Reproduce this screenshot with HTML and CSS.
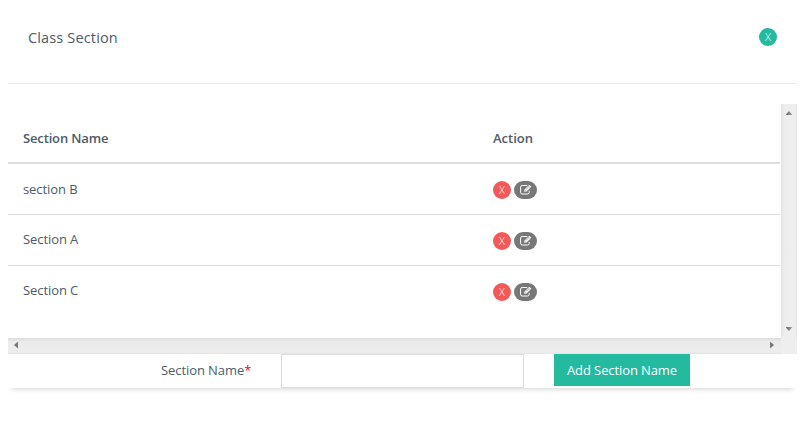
FILE: index.html
```html
<!DOCTYPE html>
<html lang="en">
<head>
<meta charset="utf-8">
<title>Class Section</title>
<link rel="stylesheet" href="styles.css">
</head>
<body>
<svg class="defs" width="0" height="0">
  <symbol id="edit" viewBox="0 0 12 11">
    <path d="M7.2 1.5H2.2Q.6 1.5 .6 3.1V8.4Q.6 10 2.2 10H7.6Q9.2 10 9.2 8.4V6.9" fill="none" stroke="#fff" stroke-width="1"/>
    <path d="M4.3 5.8 9.3 .8 11.3 2.8 6.3 7.8H4.3Z" fill="#fff"/>
    <path d="M5 6.5 6 7.3M8.3 2 10.1 3.8M6.1 5.4 8.6 2.9" stroke="#777" stroke-width=".6"/>
  </symbol>
</svg>
<main class="panel">
  <header class="head"><h1>Class Section</h1><button class="dot close">X</button></header>
  <div class="viewer">
    <div class="content">
      <div class="row columns"><span>Section Name</span><span>Action</span></div>
      <div class="row"><span>section B</span><div class="actions"><button class="dot remove">X</button><button class="dot edit"><svg><use href="#edit"/></svg></button></div></div>
      <div class="row"><span>Section A</span><div class="actions"><button class="dot remove">X</button><button class="dot edit"><svg><use href="#edit"/></svg></button></div></div>
      <div class="row"><span>Section C</span><div class="actions"><button class="dot remove">X</button><button class="dot edit"><svg><use href="#edit"/></svg></button></div></div>
    </div>
    <div class="vbar"><i class="up"></i><i class="down"></i></div>
    <div class="hbar"><i class="left"></i><i class="right"></i></div>
    <div class="corner"></div>
  </div>
  <form class="add"><label for="name">Section Name<b>*</b></label><input id="name" type="text"><button class="submit" type="button">Add Section Name</button></form>
</main>
<div class="shade"></div>
</body>
</html>
```

FILE: styles.css
```css
* { box-sizing: border-box; }
body { margin: 0; background: #fff; color: #4d5b69; font: 13px/18px "Open Sans", sans-serif; }
button { font: inherit; border: 0; padding: 0; color: #fff; }
.defs { display: block; }
.panel { width: 789px; height: 388px; margin-left: 8px; box-shadow: 1px 0 0 #fdfdfd, -1px 0 0 #fdfdfd; }
.shade { width: 789px; height: 6px; margin-left: 8px; background: linear-gradient(90deg, #fff, transparent 8px, transparent 781px, #fff), linear-gradient(#e2e2e2, #f6f6f6 50%, #fff); }
.head { height: 84px; padding: 28px 20px 0; display: flex; justify-content: space-between; align-items: flex-start; border-bottom: 1px solid #ebebeb; }
h1 { margin: 0; font-size: 14.5px; line-height: 20px; font-weight: 500; letter-spacing: .15px; }
.dot { height: 18px; border-radius: 9px; font-weight: 300; font-size: 11px; line-height: 18px; text-align: center; }
.close { width: 18px; background: #23baa0; }
.remove { width: 18px; background: #f35958; }
.edit { width: 23px; background: #777; display: flex; align-items: center; justify-content: center; }
.edit svg { width: 12px; height: 11px; margin-top: -1px; }
.viewer { height: 250px; margin-top: 20px; display: grid; grid-template: 233px 17px / 773px 16px; }
.content { padding-right: 1px; }
.row { display: grid; grid-template-columns: 470px 1fr; height: 51px; border-bottom: 1px solid #ddd; padding: 15px 15px 0; letter-spacing: -.08px; }
.row:nth-child(2) { padding-top: 16px; }
.row:last-child { border-bottom: 0; }
.row.columns { height: 60px; padding-top: 25px; border-bottom-width: 2px; font-weight: 600; letter-spacing: -.15px; }
.row.columns span:last-child { letter-spacing: 0; }
.actions { display: flex; gap: 3px; padding-top: 2px; }
.row:nth-child(2) .actions { padding-top: 1px; }
.vbar { background: linear-gradient(90deg, #e2e2e2, #ededed 3px, #efefef 14px, #e4e4e4); display: flex; flex-direction: column; justify-content: space-between; align-items: center; padding: 7px 0 6px; }
.hbar { margin-top: 1px; background: linear-gradient(#dedede, #ebebeb 4px, #ededed 14px, #e4e4e4); display: flex; justify-content: space-between; align-items: center; padding: 0 7px 2px 6px; }
.corner { background: #eee; }
.up, .down { width: 7px; height: 4px; background: linear-gradient(90deg, #666, #aaa); }
.up { clip-path: polygon(50% 0, 100% 100%, 0 100%); }
.down { clip-path: polygon(0 0, 100% 0, 50% 100%); }
.left, .right { width: 4px; height: 7px; background: #777; }
.left { clip-path: polygon(0 50%, 100% 0, 100% 100%); }
.right { clip-path: polygon(0 0, 100% 50%, 0 100%); }
.add { display: flex; height: 34px; padding-left: 153px; }
.add label { width: 120px; padding-top: 7px; letter-spacing: -.08px; }
.add b { color: #f00; font-weight: 400; }
.add input { width: 243px; height: 34px; border: 1px solid #ddd; background: #fff; padding: 6px 12px; }
.submit { width: 136px; height: 32px; margin-left: 30px; background: #23baa0; letter-spacing: -.1px; }
```
